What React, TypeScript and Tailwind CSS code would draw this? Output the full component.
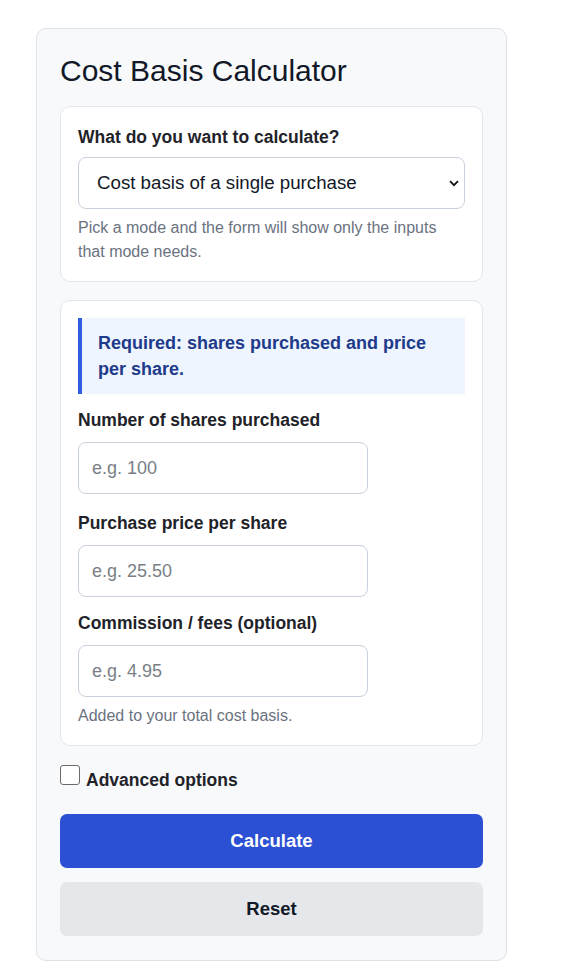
import React from "react";

export default function App() {
  const font = { fontFamily: '"Liberation Sans", Arial, sans-serif' };
  const inputCls =
    "mt-[10px] block h-[52px] w-[290px] rounded-[8px] border border-[#c9d1dd] bg-white px-[13px] text-[18px] text-[#111827] placeholder:text-[#7a7f87] outline-none";
  const labelCls = "block text-[17.5px] font-bold leading-[24px] text-[#1f2329]";
  return (
    <div className="min-h-screen bg-white" style={font}>
      <div className="ml-[36px] pt-[28px] w-[471px]">
        <div className="rounded-[10px] border border-[#dde1e8] bg-[#f8f9fb] px-[23px] pb-[24px] pt-[22px]">
          <h1 className="text-[30px] leading-[40px] text-[#111827] mb-[15px]">Cost Basis Calculator</h1>

          <div className="rounded-[10px] border border-[#e3e6ec] bg-white p-[17px]">
            <label className={labelCls + " mt-[1px] mb-[8px]"}>What do you want to calculate?</label>
            <div className="relative">
              <select
                className="block w-full appearance-none h-[52px] rounded-[8px] border border-[#c9d1dd] bg-white pl-[18px] pr-10 text-[18.7px] text-[#111827] outline-none"
                style={font}
              >
                <option>Cost basis of a single purchase</option>
              </select>
              <svg
                className="pointer-events-none absolute right-[6px] top-[23px]"
                width="10"
                height="7"
                viewBox="0 0 10 7"
                fill="none"
              >
                <path d="M1 1.2L5 5.2L9 1.2" stroke="#111" strokeWidth="1.8" />
              </svg>
            </div>
            <p className="mt-[7px] text-[16px] leading-[24px] text-[#6b7280]">
              Pick a mode and the form will show only the inputs that mode needs.
            </p>
          </div>

          <div className="mt-[18px] rounded-[10px] border border-[#e3e6ec] bg-white p-[17px]">
            <div className="border-l-4 border-[#2f5fe0] bg-[#eef5fe] py-[12px] pl-[16px] pr-[16px] text-[18px] font-bold leading-[26px] text-[#1e3a8a]">
              Required: shares purchased and price per share.
            </div>

            <label className={labelCls + " mt-[14px]"}>Number of shares purchased</label>
            <input placeholder="e.g. 100" className={inputCls} style={font} />

            <label className={labelCls + " mt-[17px]"}>Purchase price per share</label>
            <input placeholder="e.g. 25.50" className={inputCls} style={font} />

            <label className={labelCls + " mt-[14px]"}>Commission / fees (optional)</label>
            <input placeholder="e.g. 4.95" className={inputCls} style={font} />
            <p className="mt-[7px] text-[16px] leading-[24px] text-[#6b7280]">Added to your total cost basis.</p>
          </div>

          <label className="mt-[19px] flex items-start gap-[6px] text-[17.5px] font-bold leading-[26px] text-[#1f2329]">
            <span className="inline-block h-[20px] w-[20px] rounded-[3px] border-[1.5px] border-[#6b6b6b] bg-white" />
            <span className="mt-[2px]">Advanced options</span>
          </label>

          <button
            className="mt-[21px] block h-[54px] w-full rounded-[7px] bg-[#2c50d4] text-[18.5px] font-bold text-white"
            style={font}
          >
            Calculate
          </button>
          <button
            className="mt-[14px] block h-[54px] w-full rounded-[7px] bg-[#e5e7eb] text-[18.5px] font-bold text-[#111827]"
            style={font}
          >
            Reset
          </button>
        </div>
      </div>
    </div>
  );
}
